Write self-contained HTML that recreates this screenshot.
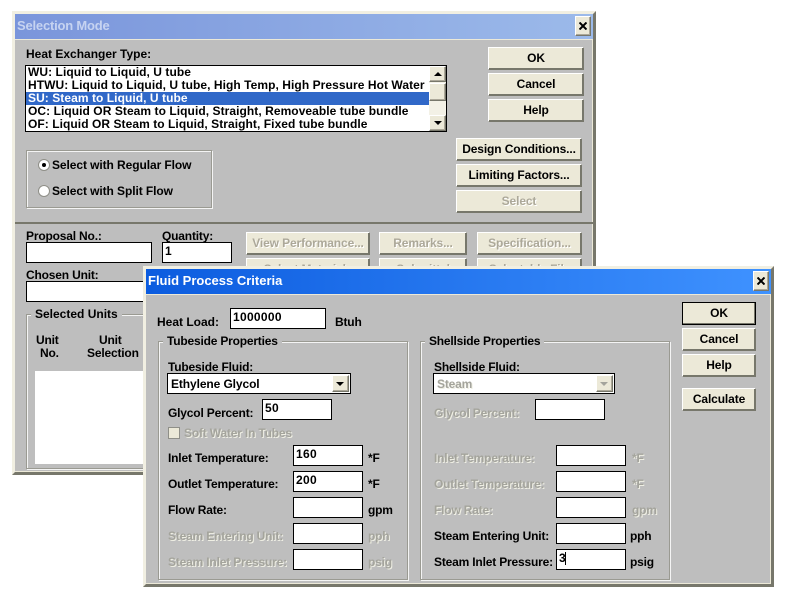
<!DOCTYPE html>
<html><head><meta charset="utf-8">
<style>
html,body{margin:0;padding:0;background:#fff;width:792px;height:604px;overflow:hidden}
body{position:relative;font:bold 12px "Liberation Sans",sans-serif;color:#000}
div,span,svg{position:absolute;box-sizing:border-box}
.win{background:#bebebe;border:solid;border-width:3px;border-color:#f1efe2 #77776b #77776b #f1efe2;box-shadow:inset -1px -1px 0 #ece9d8}
.t{white-space:nowrap;line-height:14px;letter-spacing:-.18px}
.l{letter-spacing:.06px;line-height:13px}
.b{background:#ece9d8;border:1px solid;border-color:#fff #77776b #77776b #fff;box-shadow:inset -1px -1px 0 #77776b;text-align:center;line-height:20px;white-space:nowrap;font-size:12px;letter-spacing:-.12px}
.b.d{color:#aca899;text-shadow:1px 1px 0 #fff}
.i{background:#fff;border:1px solid #000;line-height:14px;padding:1px 0 0 2px;letter-spacing:.3px}
.d{color:#a4a49c;text-shadow:1px 1px 0 #efefe4}
.g{border:1px solid #9a9a92;box-shadow:1px 1px 0 #f4f4f4,inset 1px 1px 0 #f4f4f4}
.lg{background:#bebebe;padding:0 4px;line-height:14px;white-space:nowrap;letter-spacing:-.2px}
.x{background:#ece9d8;border:1px solid;border-color:#fff #77776b #77776b #fff;box-shadow:inset -1px -1px 0 #aca899;text-align:center}
</style></head><body>

<!-- Selection Mode window -->
<div class="win" style="left:12px;top:11px;width:584px;height:464px"></div>
<div style="left:15px;top:14px;width:578px;height:25px;background:linear-gradient(90deg,#7a95db,#9cbaea)"></div>
<div style="left:15px;top:39px;width:578px;height:1px;background:#ece9d8"></div>
<div class="t" style="left:17px;top:19px;color:#c6d3f1;font-size:13px;letter-spacing:-.2px">Selection Mode</div>
<div class="x" style="left:575px;top:16px;width:16px;height:20px"></div>
<svg style="left:579px;top:22px" width="8" height="8" viewBox="0 0 8 8"><path d="M.5 .5L7.5 7.5M7.5 .5L.5 7.5" stroke="#000" stroke-width="2"/></svg>

<div class="t" style="left:26px;top:47px;letter-spacing:0">Heat Exchanger Type:</div>
<div style="left:25px;top:65px;width:422px;height:67px;background:#fff;border:1px solid #000"></div>
<div style="left:26px;top:92px;width:403px;height:13px;background:#3068c8"></div>
<div class="t l" style="left:28px;top:66px">WU: Liquid to Liquid, U tube</div>
<div class="t l" style="left:28px;top:79px">HTWU: Liquid to Liquid, U tube, High Temp, High Pressure Hot Water</div>
<div class="t l" style="left:28px;top:92px;color:#fff">SU: Steam to Liquid, U tube</div>
<div class="t l" style="left:28px;top:105px">OC: Liquid OR Steam to Liquid, Straight, Removeable tube bundle</div>
<div class="t l" style="left:28px;top:118px">OF: Liquid OR Steam to Liquid, Straight, Fixed tube bundle</div>
<div style="left:429px;top:66px;width:17px;height:65px;background:#f3f1e6"></div>
<div class="x" style="left:429px;top:66px;width:17px;height:16px"></div>
<div style="left:434px;top:72px;border:4px solid transparent;border-top:0;border-bottom:4px solid #000"></div>
<div class="x" style="left:429px;top:83px;width:17px;height:18px"></div>
<div class="x" style="left:429px;top:115px;width:17px;height:16px"></div>
<div style="left:434px;top:121px;border:4px solid transparent;border-bottom:0;border-top:4px solid #000"></div>

<div class="g" style="left:26px;top:150px;width:186px;height:58px"></div>
<div style="left:38px;top:159px;width:12px;height:12px;border-radius:50%;background:#fff;border:1px solid #8f8f88"></div>
<div style="left:42px;top:163px;width:4px;height:4px;border-radius:50%;background:#000"></div>
<div class="t" style="left:52px;top:158px;letter-spacing:-.08px">Select with Regular Flow</div>
<div style="left:38px;top:185px;width:12px;height:12px;border-radius:50%;background:#fff;border:1px solid #8f8f88"></div>
<div class="t" style="left:52px;top:184px;letter-spacing:-.08px">Select with Split Flow</div>

<div class="b" style="left:488px;top:47px;width:96px;height:23px">OK</div>
<div class="b" style="left:488px;top:73px;width:96px;height:23px">Cancel</div>
<div class="b" style="left:488px;top:99px;width:96px;height:23px">Help</div>
<div class="b" style="left:456px;top:138px;width:126px;height:23px">Design Conditions...</div>
<div class="b" style="left:456px;top:164px;width:126px;height:23px">Limiting Factors...</div>
<div class="b d" style="left:456px;top:190px;width:126px;height:23px">Select</div>

<div style="left:15px;top:222px;width:578px;height:2px;background:#77776b"></div>
<div class="t" style="left:26px;top:229px">Proposal No.:</div>
<div class="i" style="left:26px;top:242px;width:126px;height:21px"></div>
<div class="t" style="left:162px;top:229px">Quantity:</div>
<div class="i" style="left:162px;top:242px;width:70px;height:21px">1</div>
<div class="b d" style="left:246px;top:232px;width:124px;height:23px">View Performance...</div>
<div class="b d" style="left:379px;top:232px;width:88px;height:23px">Remarks...</div>
<div class="b d" style="left:477px;top:232px;width:105px;height:23px">Specification...</div>
<div class="b d" style="left:246px;top:258px;width:124px;height:23px">Select Materials</div>
<div class="b d" style="left:379px;top:258px;width:88px;height:23px">Submittal</div>
<div class="b d" style="left:477px;top:258px;width:105px;height:23px">Selectable File</div>
<div class="t" style="left:26px;top:268px">Chosen Unit:</div>
<div class="i" style="left:26px;top:281px;width:126px;height:21px"></div>
<div class="g" style="left:26px;top:314px;width:400px;height:155px"></div>
<div class="lg" style="left:31px;top:307px;letter-spacing:0">Selected Units</div>
<div class="t" style="left:36px;top:333px">Unit</div>
<div class="t" style="left:40px;top:346px">No.</div>
<div class="t" style="left:99px;top:333px">Unit</div>
<div class="t" style="left:87px;top:346px">Selection</div>
<div style="left:35px;top:371px;width:200px;height:93px;background:#fff"></div>

<!-- Fluid Process Criteria dialog -->
<div class="win" style="left:143px;top:266px;width:631px;height:321px"></div>
<div style="left:146px;top:269px;width:625px;height:25px;background:linear-gradient(90deg,#0c5cdf,#3f92ff)"></div>
<div style="left:146px;top:294px;width:625px;height:1px;background:#ece9d8"></div>
<div class="t" style="left:148px;top:274px;color:#fff;font-size:13px;letter-spacing:0">Fluid Process Criteria</div>
<div class="x" style="left:753px;top:271px;width:16px;height:20px"></div>
<svg style="left:757px;top:277px" width="8" height="8" viewBox="0 0 8 8"><path d="M.5 .5L7.5 7.5M7.5 .5L.5 7.5" stroke="#000" stroke-width="2"/></svg>

<div class="t" style="left:157px;top:315px;letter-spacing:0">Heat Load:</div>
<div class="i" style="left:230px;top:308px;width:96px;height:21px">1000000</div>
<div class="t" style="left:335px;top:315px">Btuh</div>

<div class="g" style="left:158px;top:341px;width:250px;height:239px"></div>
<div class="lg" style="left:163px;top:334px">Tubeside Properties</div>
<div class="t" style="left:168px;top:360px">Tubeside Fluid:</div>
<div class="i" style="left:167px;top:373px;width:184px;height:21px;padding:3px 0 0 3px;letter-spacing:-.1px">Ethylene Glycol</div>
<div class="x" style="left:332px;top:375px;width:17px;height:17px"></div>
<div style="left:336px;top:382px;border:4px solid transparent;border-bottom:0;border-top:4px solid #000"></div>
<div class="t" style="left:168px;top:406px">Glycol Percent:</div>
<div class="i" style="left:262px;top:399px;width:70px;height:21px">50</div>
<div style="left:168px;top:427px;width:12px;height:12px;background:#ece9d8;border:1px solid #8f8f88"></div>
<div class="t d" style="left:184px;top:426px">Soft Water In Tubes</div>
<div class="t" style="left:168px;top:451px">Inlet Temperature:</div>
<div class="i" style="left:293px;top:445px;width:70px;height:21px">160</div>
<div class="t" style="left:368px;top:451px">*F</div>
<div class="t" style="left:168px;top:477px">Outlet Temperature:</div>
<div class="i" style="left:293px;top:471px;width:70px;height:21px">200</div>
<div class="t" style="left:368px;top:477px">*F</div>
<div class="t" style="left:168px;top:503px">Flow Rate:</div>
<div class="i" style="left:293px;top:497px;width:70px;height:21px"></div>
<div class="t" style="left:368px;top:503px">gpm</div>
<div class="t d" style="left:168px;top:529px">Steam Entering Unit:</div>
<div class="i" style="left:293px;top:523px;width:70px;height:21px"></div>
<div class="t d" style="left:368px;top:529px">pph</div>
<div class="t d" style="left:168px;top:555px">Steam Inlet Pressure:</div>
<div class="i" style="left:293px;top:549px;width:70px;height:21px"></div>
<div class="t d" style="left:368px;top:555px">psig</div>

<div class="g" style="left:420px;top:341px;width:250px;height:239px"></div>
<div class="lg" style="left:425px;top:334px">Shellside Properties</div>
<div class="t" style="left:434px;top:360px">Shellside Fluid:</div>
<div class="i" style="left:433px;top:373px;width:182px;height:21px"></div>
<div class="t d" style="left:437px;top:377px">Steam</div>
<div class="x" style="left:596px;top:375px;width:17px;height:17px"></div>
<div style="left:600px;top:382px;border:4px solid transparent;border-bottom:0;border-top:4px solid #a4a49c"></div>
<div class="t d" style="left:434px;top:406px">Glycol Percent:</div>
<div class="i" style="left:535px;top:399px;width:70px;height:21px"></div>
<div class="t d" style="left:434px;top:451px">Inlet Temperature:</div>
<div class="i" style="left:556px;top:445px;width:70px;height:21px"></div>
<div class="t d" style="left:632px;top:451px">*F</div>
<div class="t d" style="left:434px;top:477px">Outlet Temperature:</div>
<div class="i" style="left:556px;top:471px;width:70px;height:21px"></div>
<div class="t d" style="left:632px;top:477px">*F</div>
<div class="t d" style="left:434px;top:503px">Flow Rate:</div>
<div class="i" style="left:556px;top:497px;width:70px;height:21px"></div>
<div class="t d" style="left:632px;top:503px">gpm</div>
<div class="t" style="left:434px;top:529px">Steam Entering Unit:</div>
<div class="i" style="left:556px;top:523px;width:70px;height:21px"></div>
<div class="t" style="left:630px;top:529px">pph</div>
<div class="t" style="left:434px;top:555px">Steam Inlet Pressure:</div>
<div class="i" style="left:556px;top:549px;width:70px;height:21px">3</div>
<div style="left:565px;top:552px;width:1px;height:13px;background:#000"></div>
<div class="t" style="left:630px;top:555px">psig</div>

<div class="b" style="left:682px;top:302px;width:74px;height:23px;border:1px solid #000;box-shadow:inset -1px -1px 0 #77776b">OK</div>
<div class="b" style="left:682px;top:328px;width:74px;height:23px">Cancel</div>
<div class="b" style="left:682px;top:354px;width:74px;height:23px">Help</div>
<div class="b" style="left:682px;top:388px;width:74px;height:23px">Calculate</div>
</body></html>
